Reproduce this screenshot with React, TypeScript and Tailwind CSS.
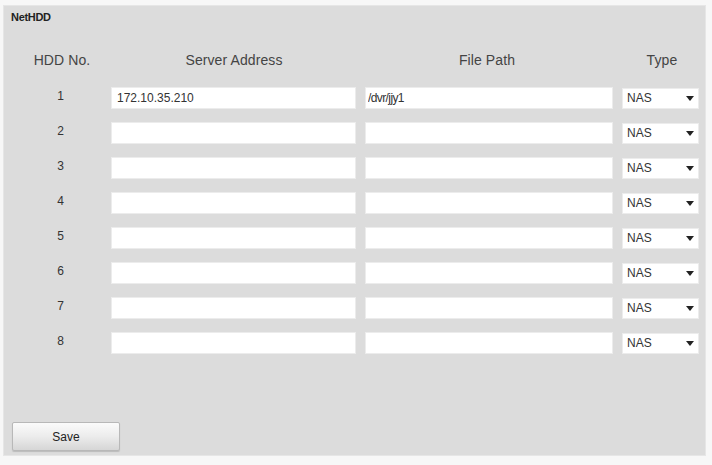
import { useState } from "react";

type Disk = { id: number; server: string; path: string; type: string };

const INITIAL: Disk[] = Array.from({ length: 8 }, (_, i) => ({
  id: i + 1,
  server: i === 0 ? "172.10.35.210" : "",
  path: i === 0 ? "/dvr/jjy1" : "",
  type: "NAS",
}));

function Caret() {
  return (
    <svg width="8" height="5" viewBox="0 0 8 5" className="text-[#222]">
      <path d="M0 0h8L4 5z" fill="currentColor" />
    </svg>
  );
}

export default function App() {
  const [disks, setDisks] = useState<Disk[]>(INITIAL);

  const update = (id: number, key: "server" | "path", value: string) =>
    setDisks((d) => d.map((x) => (x.id === id ? { ...x, [key]: value } : x)));

  return (
    <div className="w-[712px] h-[465px] bg-[#f7f7f7] pt-[5px] pl-[3px] font-['Liberation_Sans',Arial,sans-serif] text-[#333]">
      <div className="w-[703px] h-[451px] bg-[#dcdcdc] border border-[#e6e6e6] flex flex-col">
        <div className="pl-[7px] pt-[3px] h-[22px] text-[11px] font-bold text-[#222] tracking-[-0.3px]">
          NetHDD
        </div>

        {/* column headings */}
        <div className="flex items-center mt-[24px] h-[16px] text-[14px] text-[#444] tracking-[0.1px]">
          <div className="w-[116px] text-center">HDD No.</div>
          <div className="w-[228px] text-center">Server Address</div>
          <div className="w-[278px] text-center">File Path</div>
          <div className="w-[72px] text-center">Type</div>
        </div>

        <div className="flex flex-col gap-[13px] pt-[19px]">
          {disks.map((d) => (
            <div key={d.id} className="flex items-center h-[22px]">
              <div className="w-[107px] text-center text-[12px] pl-[6px] -mt-[5px]">{d.id}</div>
              <input
                value={d.server}
                onChange={(e) => update(d.id, "server", e.target.value)}
                className="w-[245px] h-[22px] bg-white border border-[#ececec] px-[5px] text-[12px] text-[#333] outline-none"
              />
              <input
                value={d.path}
                onChange={(e) => update(d.id, "path", e.target.value)}
                className="ml-[9px] w-[248px] h-[22px] bg-white border border-[#ececec] px-[2px] text-[12px] text-[#333] tracking-[-0.6px] outline-none"
              />
              <div className="ml-[9px] w-[77px] h-[21px] bg-white border border-[#ececec] flex items-center justify-between pl-[4px] pr-[4px]">
                <span className="text-[12px] text-[#333]">{d.type}</span>
                <Caret />
              </div>
            </div>
          ))}
        </div>

        <div className="mt-auto pl-[8px] pb-[4px]">
          <button
            type="button"
            className="w-[108px] h-[29px] border border-[#b8b8b8] rounded-[2px] bg-gradient-to-b from-[#fbfbfb] via-[#ececec] to-[#d6d6d6] text-[12px] text-[#222] shadow-[0_1px_1px_rgba(0,0,0,0.15)]"
          >
            Save
          </button>
        </div>
      </div>
    </div>
  );
}
